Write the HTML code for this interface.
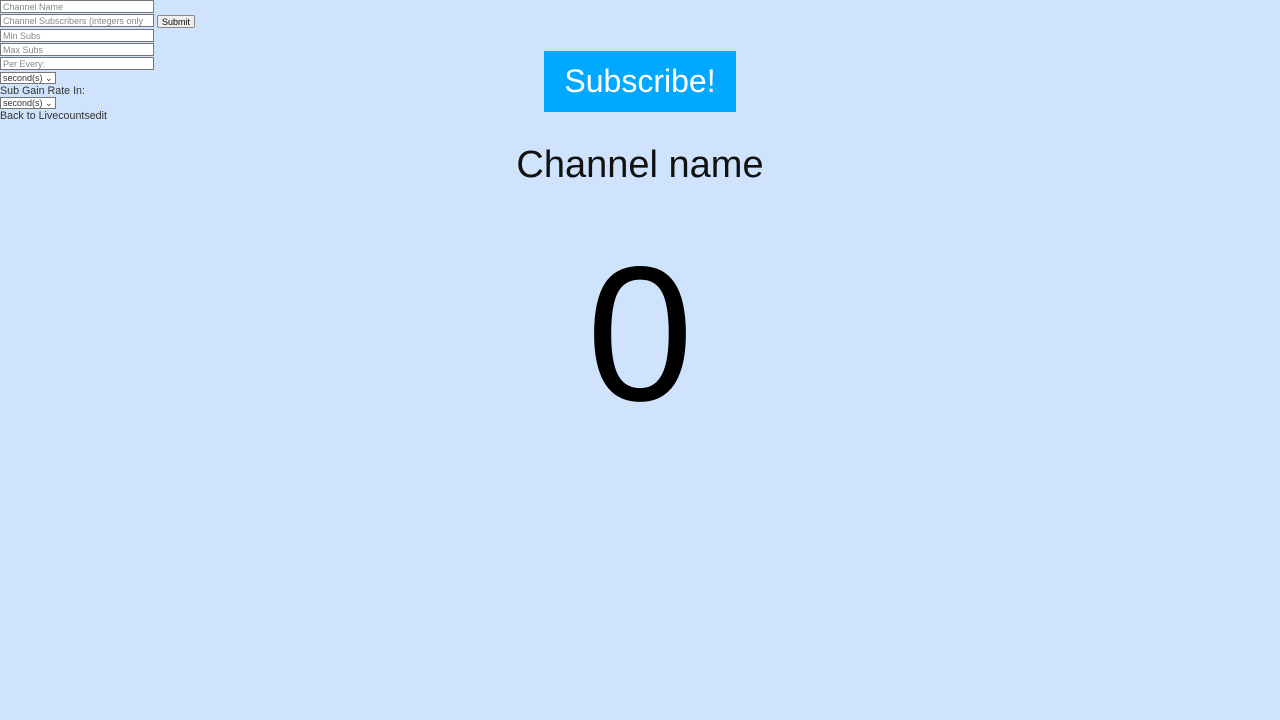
<!DOCTYPE html>
<html><head><style>
body{margin:0;background:#cfe3fc;font-family:"Liberation Sans",sans-serif;width:1280px;height:720px;overflow:hidden;position:relative}
.in{position:absolute;left:0;height:13px;border:1px solid #767676;background:#fff;font-size:9px;color:#888;padding:0 2px;box-sizing:border-box;width:154px;line-height:12px;font-family:inherit}
.sel{position:absolute;left:0;width:56px;height:12px;border:1px solid #767676;background:#fff;font-size:9px;color:#333;box-sizing:border-box;line-height:10px;padding-left:2px}
.t{position:absolute;left:0;font-size:10.7px;color:#333}
</style></head><body>
<div class="in" style="top:0">Channel Name</div>
<div class="in" style="top:14px">Channel Subscribers (integers only</div>
<div style="position:absolute;left:157px;top:15px;width:38px;height:13px;border:1px solid #888;background:#efefef;border-radius:2px;font-size:9px;text-align:center;line-height:12px;box-sizing:border-box;color:#000">Submit</div>
<div class="in" style="top:29px">Min Subs</div>
<div class="in" style="top:43px">Max Subs</div>
<div class="in" style="top:57px">Per Every:</div>
<div class="sel" style="top:72px">second(s) ⌄</div>
<div class="t" style="top:85px">Sub Gain Rate In:</div>
<div class="sel" style="top:97px">second(s) ⌄</div>
<div class="t" style="top:110px">Back to Livecountsedit</div>
<div style="position:absolute;left:544px;top:51px;width:192px;height:61px;background:#00a8ff;color:#fff;font-size:32px;text-align:center;line-height:61px">Subscribe!</div>
<div style="position:absolute;left:0;width:1280px;top:144px;text-align:center;font-size:38px;color:#111">Channel name</div>
<div style="position:absolute;left:0;width:1280px;top:238px;text-align:center;font-size:192px;line-height:192px;color:#000">0</div>
</body></html>
